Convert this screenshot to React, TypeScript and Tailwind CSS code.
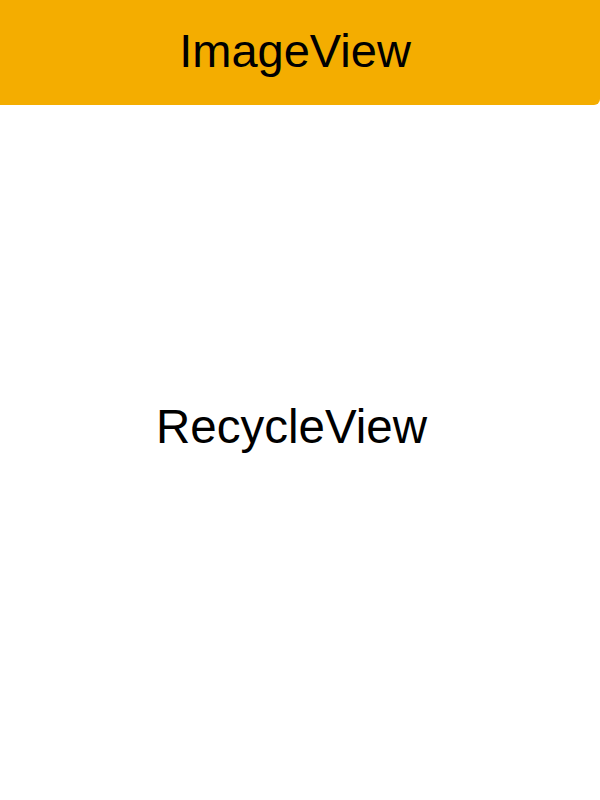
export default function App() {
  return (
    <div
      className="w-[600px] h-[800px] bg-white flex flex-col"
      style={{ fontFamily: '"Liberation Sans", Arial, sans-serif' }}
    >
      <header className="h-[105px] bg-[#f4ad00] rounded-br-[6px] flex justify-center pt-[27px]">
        <h1 className="text-[47px] leading-none text-black mr-[10px]">ImageView</h1>
      </header>
      <main className="flex-1 flex justify-center pt-[298px]">
        <p className="text-[47.5px] leading-none text-black mr-[17px]">RecycleView</p>
      </main>
    </div>
  );
}
